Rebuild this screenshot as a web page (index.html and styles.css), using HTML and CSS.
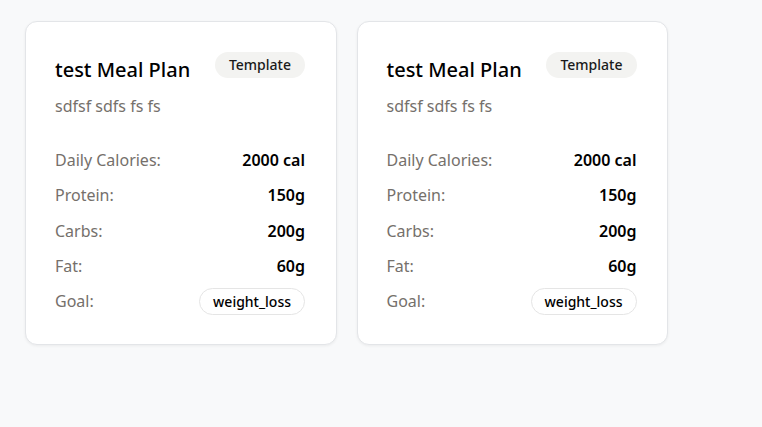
FILE: index.html
```html
<!DOCTYPE html>
<html>
<head>
<meta charset="utf-8">
<link rel="stylesheet" href="styles.css">
</head>
<body>
<div class="grid">
  <div class="card">
    <div class="head">
      <h3 class="title">test Meal Plan</h3>
      <span class="badge">Template</span>
    </div>
    <p class="desc">sdfsf sdfs fs fs</p>
    <div class="rows">
      <div class="row"><span class="label">Daily Calories:</span><span class="value">2000 cal</span></div>
      <div class="row"><span class="label">Protein:</span><span class="value">150g</span></div>
      <div class="row"><span class="label">Carbs:</span><span class="value">200g</span></div>
      <div class="row"><span class="label">Fat:</span><span class="value">60g</span></div>
      <div class="row"><span class="label">Goal:</span><span class="goal">weight_loss</span></div>
    </div>
  </div>
  <div class="card">
    <div class="head">
      <h3 class="title">test Meal Plan</h3>
      <span class="badge">Template</span>
    </div>
    <p class="desc">sdfsf sdfs fs fs</p>
    <div class="rows">
      <div class="row"><span class="label">Daily Calories:</span><span class="value">2000 cal</span></div>
      <div class="row"><span class="label">Protein:</span><span class="value">150g</span></div>
      <div class="row"><span class="label">Carbs:</span><span class="value">200g</span></div>
      <div class="row"><span class="label">Fat:</span><span class="value">60g</span></div>
      <div class="row"><span class="label">Goal:</span><span class="goal">weight_loss</span></div>
    </div>
  </div>
</div>
</body>
</html>
```

FILE: styles.css
```css
* { box-sizing: border-box; }
html, body { margin: 0; padding: 0; }
body {
  background: #f8f9fa;
  font-family: "Noto Sans", "Open Sans", sans-serif;
  color: #111;
  width: 762px;
  height: 427px;
  overflow: hidden;
}
.grid {
  display: grid;
  grid-template-columns: 311.5px 311.5px;
  gap: 20px;
  padding: 21px 0 0 25px;
}
.card {
  background: #fff;
  border: 1px solid #e3e5e8;
  border-radius: 12px;
  box-shadow: 0 1px 3px rgba(0,0,0,0.06);
  padding: 30px 30.5px 29px 29px;
  height: 324px;
}
.head {
  display: flex;
  justify-content: space-between;
  align-items: flex-start;
  height: 36px;
}
.title {
  margin: 0;
  font-size: 20px;
  font-weight: 500;
  line-height: 36px;
  color: #000;
}
.badge {
  background: #f3f3f1;
  border-radius: 999px;
  font-size: 14px;
  font-weight: 500;
  line-height: 26px;
  height: 26px;
  padding: 0 14px;
  color: #1a1a1a;
}
.desc {
  margin: 6px 0 0;
  font-size: 16px;
  line-height: 24px;
  color: #75706b;
}
.rows {
  margin-top: 30px;
  display: flex;
  flex-direction: column;
  gap: 11.25px;
}
.row {
  display: flex;
  justify-content: space-between;
  align-items: center;
  height: 24px;
  font-size: 16px;
}
.label { color: #75706b; }
.value { font-weight: 600; color: #000; }
.goal {
  border: 1px solid #e5e5e5;
  border-radius: 999px;
  font-size: 14px;
  font-weight: 500;
  line-height: 25px;
  height: 27px;
  padding: 0 13px;
  color: #000;
}
```
